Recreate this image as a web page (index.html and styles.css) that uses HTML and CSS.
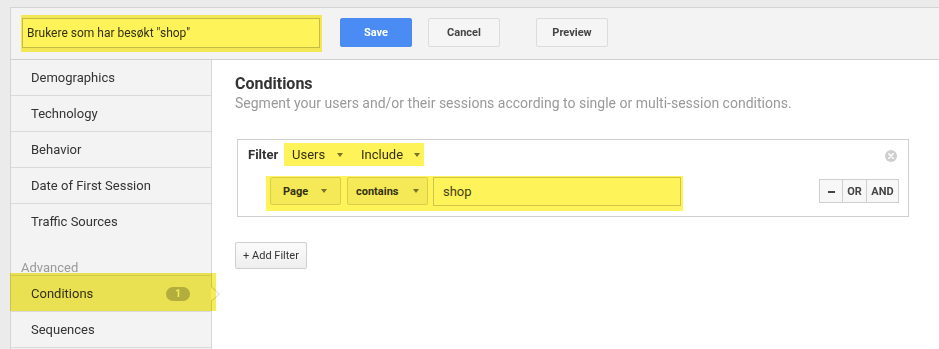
FILE: index.html
```html
<!DOCTYPE html>
<html lang="no">
<head>
    <meta charset="UTF-8">
    <meta name="viewport" content="width=device-width, initial-scale=1.0">
    <title>Segment Builder</title>
    <link rel="stylesheet" href="styles.css">
</head>
<body>
    <div class="frame">
        <div class="toolbar">
            <div class="name hl">
                <div class="name-input">Brukere som har besøkt "shop"</div>
            </div>
            <button class="btn btn-save">Save</button>
            <button class="btn btn-cancel">Cancel</button>
            <button class="btn btn-preview">Preview</button>
        </div>

        <div class="workspace">
            <ul class="nav">
                <li class="nav-item">Demographics</li>
                <li class="nav-item">Technology</li>
                <li class="nav-item">Behavior</li>
                <li class="nav-item">Date of First Session</li>
                <li class="nav-item nav-last">Traffic Sources</li>
                <li class="nav-heading">Advanced</li>
                <li class="nav-item nav-active">
                    Conditions <span class="badge">1</span>
                    <span class="nav-arrow"></span>
                </li>
                <li class="nav-item">Sequences</li>
            </ul>

            <div class="main">
                <h2>Conditions</h2>
                <p class="hint">Segment your users and/or their sessions according to single or multi-session conditions.</p>

                <div class="filter">
                    <div class="filter-head">
                        <span class="filter-label">Filter</span>
                        <div class="scope hl">
                            <span class="dd dd-users">Users <i class="caret"></i></span>
                            <span class="dd dd-include">Include <i class="caret"></i></span>
                        </div>
                        <svg class="close" width="12" height="12" viewBox="0 0 12 12">
                            <circle cx="6" cy="6" r="6" fill="#cfcfcf"/>
                            <path d="M3.8 3.8 L8.2 8.2 M8.2 3.8 L3.8 8.2" stroke="#fff" stroke-width="1.6" stroke-linecap="round"/>
                        </svg>
                    </div>
                    <div class="filter-row">
                        <div class="rule hl">
                            <span class="sel sel-page">Page <i class="caret"></i></span>
                            <span class="sel sel-op">contains <i class="caret"></i></span>
                            <div class="value">shop</div>
                        </div>
                        <div class="logic">
                            <button class="logic-btn logic-remove"><span class="dash"></span></button>
                            <button class="logic-btn">OR</button>
                            <button class="logic-btn logic-and">AND</button>
                        </div>
                    </div>
                </div>

                <button class="add-filter">+ Add Filter</button>
            </div>
        </div>
    </div>
</body>
</html>
```

FILE: styles.css
```css
/* Page */
html, body {
    height: 100%;
}

body {
    margin: 0;
    background: #ebebeb;
    font-family: Roboto, "Liberation Sans", sans-serif;
    color: #333;
    overflow: hidden;
}

.frame {
    margin: 7px 0 0 10px;
    height: calc(100% - 7px);
    border-top: 1px solid #d4d4d4;
    border-left: 1px solid #d4d4d4;
    display: flex;
    flex-direction: column;
}

/* Highlighter marks */
.hl {
    position: relative;
}

.hl::after {
    content: "";
    position: absolute;
    inset: 0;
    background: #fff35a;
    mix-blend-mode: multiply;
    pointer-events: none;
}

/* Toolbar */
.toolbar {
    height: 51px;
    flex: none;
    background: #f3f3f3;
    border-bottom: 1px solid #cfcfcf;
    display: flex;
    align-items: flex-start;
    padding-left: 10px;
}

.name {
    margin-top: 7px;
    padding: 3px 2px 4px 1px;
}

.name-input {
    width: 298px;
    height: 30px;
    box-sizing: border-box;
    border: 1px solid #c4c4c4;
    background: #fff;
    padding-left: 4px;
    font-size: 12px;
    line-height: 28px;
    color: #333;
}

.btn {
    margin-top: 10px;
    width: 72px;
    height: 29px;
    border-radius: 2px;
    border: 1px solid #dcdcdc;
    background: #f5f5f5;
    font-family: Roboto, "Liberation Sans", sans-serif;
    font-size: 11px;
    font-weight: bold;
    color: #444;
    padding: 0;
}

.btn-save {
    margin-left: 18px;
    background: #4a8cf3;
    border-color: #4a8cf3;
    color: #fff;
}

.btn-cancel {
    margin-left: 16px;
}

.btn-preview {
    margin-left: 36px;
}

/* Workspace */
.workspace {
    flex: 1;
    display: flex;
    min-height: 0;
}

.nav {
    list-style: none;
    margin: 0;
    padding: 0;
    width: 200px;
    flex: none;
    background: #f3f3f3;
    border-right: 1px solid #d6d6d6;
}

.nav-item {
    height: 35px;
    line-height: 35px;
    padding-left: 20px;
    font-size: 13px;
    color: #333;
    border-bottom: 1px solid #dadada;
}

.nav-last {
    height: 36px;
    border-bottom: none;
}

.nav-heading {
    height: 14px;
    padding: 21px 0 0 10px;
    line-height: 14px;
    font-size: 13px;
    color: #999;
    border-bottom: 1px solid #dadada;
}

.nav-active {
    position: relative;
    display: flex;
    align-items: center;
    justify-content: space-between;
    padding-right: 21px;
}

.nav-arrow {
    position: absolute;
    left: 100%;
    top: 50%;
    margin-top: -8px;
    border-style: solid;
    border-width: 8px 0 8px 9px;
    border-color: transparent transparent transparent #cfcfcf;
}

.nav-arrow::after {
    content: "";
    position: absolute;
    left: -9px;
    top: -7px;
    border-style: solid;
    border-width: 7px 0 7px 8px;
    border-color: transparent transparent transparent #fff;
}

.nav-active::after {
    content: "";
    position: absolute;
    top: -3px;
    left: -1px;
    right: -5px;
    bottom: 0;
    background: #f5ed55;
    mix-blend-mode: multiply;
    pointer-events: none;
}

.badge {
    width: 24px;
    height: 14px;
    border-radius: 7px;
    background: #bababa;
    color: #fff;
    font-size: 10px;
    font-weight: bold;
    line-height: 14px;
    text-align: center;
}

/* Main panel */
.main {
    flex: 1;
    background: #fff;
    padding: 14px 0 0 23px;
}

.main h2 {
    margin: 0;
    font-size: 16px;
    line-height: 20px;
    font-weight: bold;
    color: #333;
}

.hint {
    margin: 0;
    font-size: 14px;
    line-height: 18px;
    color: #999;
}

.filter {
    margin: 27px 0 0 2px;
    width: 672px;
    box-sizing: border-box;
    border: 1px solid #cfcfcf;
    padding: 3px 9px 5px 10px;
}

.filter-head {
    height: 23px;
    display: flex;
    align-items: center;
}

.filter-label {
    width: 36px;
    font-size: 13px;
    font-weight: bold;
    color: #333;
}

.scope {
    height: 23px;
    display: flex;
    align-items: center;
    padding: 0 4px 0 8px;
    font-size: 13px;
    color: #333;
}

.dd {
    display: flex;
    align-items: center;
    justify-content: space-between;
    box-sizing: border-box;
}

.dd-users {
    width: 69px;
    padding-right: 18px;
}

.dd-include {
    width: 59px;
}

.caret {
    width: 0;
    height: 0;
    border-style: solid;
    border-width: 4px 3.5px 0 3.5px;
    border-color: #777 transparent transparent transparent;
}

.close {
    margin: 3px 2px 0 auto;
}

.filter-row {
    margin-top: 10px;
    display: flex;
    align-items: flex-start;
}

.rule {
    margin-left: 18px;
    display: flex;
    padding: 1px 2px 5px 4px;
}

.sel {
    height: 28px;
    box-sizing: border-box;
    border: 1px solid #d8d8d8;
    border-radius: 2px;
    background: #f5f5f5;
    display: flex;
    align-items: center;
    justify-content: space-between;
    font-size: 11px;
    font-weight: bold;
    color: #333;
}

.sel-page {
    width: 71px;
    padding: 0 13px 0 12px;
}

.sel-op {
    width: 81px;
    margin-left: 6px;
    padding: 0 8px 0 8px;
}

.value {
    width: 248px;
    height: 29px;
    margin-left: 5px;
    box-sizing: border-box;
    border: 1px solid #cfcfcf;
    background: #fff;
    padding-left: 9px;
    font-size: 13px;
    line-height: 27px;
    color: #444;
}

.logic {
    margin: 3px 0 0 auto;
    display: flex;
}

.logic-btn {
    width: 24px;
    height: 24px;
    padding: 0;
    border: 1px solid #cfcfcf;
    border-left: none;
    background: #f7f7f7;
    font-family: Roboto, "Liberation Sans", sans-serif;
    font-size: 11px;
    font-weight: bold;
    color: #444;
}

.logic-remove {
    border-left: 1px solid #cfcfcf;
}

.logic-and {
    width: 32px;
}

.dash {
    display: inline-block;
    width: 7px;
    height: 2px;
    background: #444;
    vertical-align: middle;
}

.add-filter {
    margin-top: 25px;
    width: 72px;
    height: 27px;
    padding: 0;
    border: 1px solid #cfcfcf;
    border-radius: 2px;
    background: linear-gradient(#fbfbfb, #eeeeee);
    font-family: Roboto, "Liberation Sans", sans-serif;
    font-size: 11px;
    color: #333;
}
```
